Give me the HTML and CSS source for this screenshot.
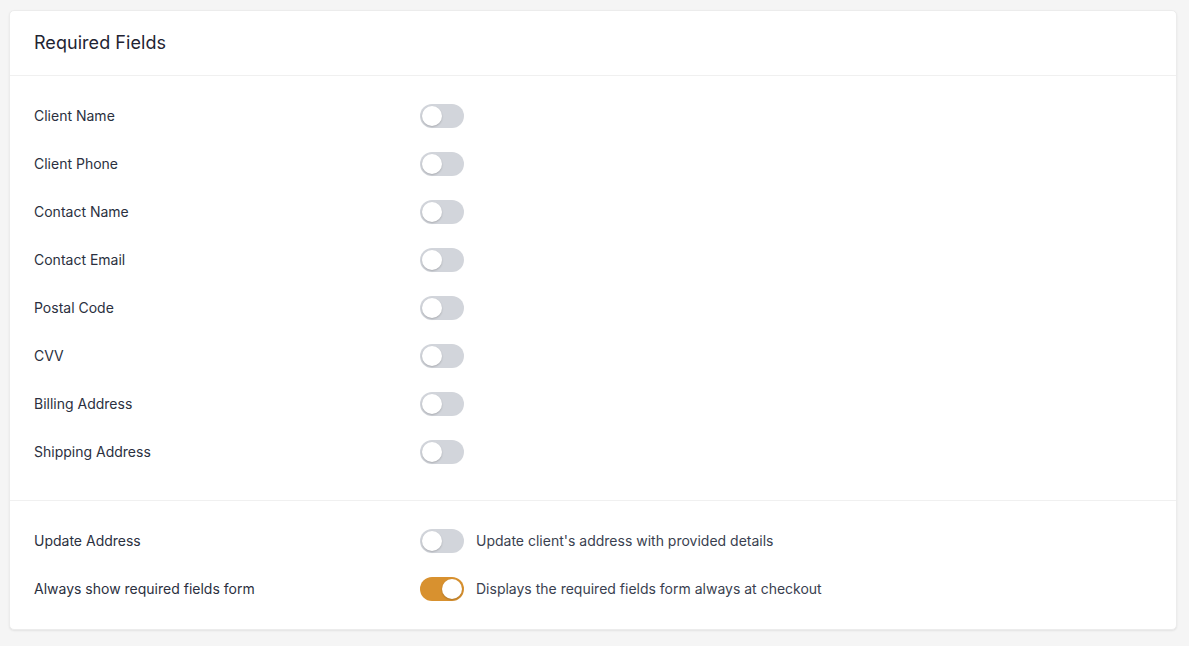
FILE: index.html
```html
<!DOCTYPE html>
<html lang="en">
<head>
<meta charset="utf-8">
<title>Required Fields</title>
<link rel="stylesheet" href="styles.css">
</head>
<body>
<div class="card">
  <div class="card-header"><h2 class="title">Required Fields</h2></div>
  <div class="section section-fields">
    <div class="row"><span class="label">Client Name</span><span class="toggle"><span class="knob"></span></span></div>
    <div class="row"><span class="label">Client Phone</span><span class="toggle"><span class="knob"></span></span></div>
    <div class="row"><span class="label">Contact Name</span><span class="toggle"><span class="knob"></span></span></div>
    <div class="row"><span class="label">Contact Email</span><span class="toggle"><span class="knob"></span></span></div>
    <div class="row"><span class="label">Postal Code</span><span class="toggle"><span class="knob"></span></span></div>
    <div class="row"><span class="label">CVV</span><span class="toggle"><span class="knob"></span></span></div>
    <div class="row"><span class="label">Billing Address</span><span class="toggle"><span class="knob"></span></span></div>
    <div class="row"><span class="label">Shipping Address</span><span class="toggle"><span class="knob"></span></span></div>
  </div>
  <div class="section section-options">
    <div class="row"><span class="label">Update Address</span><span class="toggle"><span class="knob"></span></span><span class="desc">Update client's address with provided details</span></div>
    <div class="row"><span class="label">Always show required fields form</span><span class="toggle on"><span class="knob"></span></span><span class="desc">Displays the required fields form always at checkout</span></div>
  </div>
</div>
</body>
</html>
```
FILE: styles.css
```css
* { box-sizing: border-box; }
html, body { margin: 0; padding: 0; }
body {
  background: #f5f5f5;
  font-family: Inter, "Noto Sans", "Liberation Sans", sans-serif;
  color: #2b3040;
  padding: 10px 12px 16px 9px;
}
.card {
  background: #fff;
  border: 1px solid #ececec;
  border-radius: 5px;
  box-shadow: 0 1px 2px rgba(0,0,0,0.08);
}
.card-header {
  height: 65px;
  display: flex;
  align-items: center;
  padding: 0 24px;
  border-bottom: 1px solid #f0f0f0;
}
.title {
  margin: 0;
  font-size: 18px;
  font-weight: 400;
  color: #1f2433;
  padding-bottom: 2px;
  letter-spacing: 0.05px;
}
.section { padding: 16px 24px; }
.section-fields { padding-bottom: 24px; border-bottom: 1px solid #f0f0f0; }
.section-options { padding-bottom: 16px; }
.row {
  height: 48px;
  display: flex;
  align-items: center;
}
.label {
  width: 386px;
  font-size: 14px;
  line-height: 20px;
  padding-bottom: 1px;
  color: #2b3040;
}
.toggle {
  width: 44px;
  height: 24px;
  border-radius: 12px;
  background: #d2d5db;
  position: relative;
  flex: none;
}
.knob {
  position: absolute;
  top: 2px;
  left: 2px;
  width: 20px;
  height: 20px;
  border-radius: 50%;
  background: #fff;
  box-shadow: 0 1px 2px rgba(0,0,0,0.2);
}
.toggle.on { background: #d8912f; }
.toggle.on .knob { left: 22px; }
.desc {
  margin-left: 12px;
  font-size: 14px;
  line-height: 20px;
  padding-bottom: 1px;
  color: #3a3f50;
}
```
